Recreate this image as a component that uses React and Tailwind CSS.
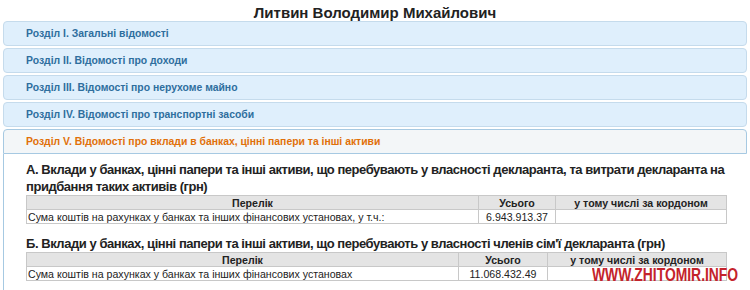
import React from "react";

const sections = [
  "Розділ I. Загальні відомості",
  "Розділ II. Відомості про доходи",
  "Розділ III. Відомості про нерухоме майно",
  "Розділ IV. Відомості про транспортні засоби",
];

function AssetTable({ cols, name, total }) {
  return (
    <table className="w-[701px] table-fixed border-collapse text-[10.6px] leading-[12px] text-[#222]">
      <colgroup>
        <col style={{ width: cols[0] }} />
        <col style={{ width: cols[1] }} />
        <col />
      </colgroup>
      <thead>
        <tr className="bg-[#e4e4e4]">
          <th className="h-[14px] border border-[#c8c8c8] p-0 text-center font-bold">Перелік</th>
          <th className="border border-[#c8c8c8] p-0 text-center font-bold">Усього</th>
          <th className="border border-[#c8c8c8] p-0 text-center font-bold">у тому числі за кордоном</th>
        </tr>
      </thead>
      <tbody>
        <tr>
          <td className="h-[14px] whitespace-nowrap border border-[#c8c8c8] px-[1px] py-0">{name}</td>
          <td className="border border-[#c8c8c8] p-0 text-center">{total}</td>
          <td className="border border-[#c8c8c8] p-0"></td>
        </tr>
      </tbody>
    </table>
  );
}

export default function App() {
  return (
    <div className="relative h-[290px] w-[750px] overflow-hidden bg-white font-[family-name:'Liberation_Sans',Arial,sans-serif]">
      <h1 className="h-[21px] pt-[5px] text-center text-[15px] font-bold leading-[16px] text-[#222]">
        Литвин Володимир Михайлович
      </h1>
      <div className="mx-[3px]">
        {sections.map((s) => (
          <div
            key={s}
            className="mb-[2px] h-[25px] rounded-[4px] border border-[#c5dbec] bg-[#dfeffc] pl-[22px] text-[10.4px] font-bold leading-[23px] text-[#2e6e9e]"
          >
            {s}
          </div>
        ))}
        <div className="h-[25px] rounded-t-[4px] border border-[#a6c9e2] bg-[#f3f6f8] pl-[22px] text-[10.4px] font-bold leading-[23px] text-[#e17009]">
          Розділ V. Відомості про вклади в банках, цінні папери та інші активи
        </div>
        <div className="h-[200px] border-l border-[#a6c9e2] pl-[22px] pt-[7px]">
          <h3 className="w-[701px] text-[13px] font-bold leading-[17px] tracking-[-0.45px] text-[#222]">
            А. Вклади у банках, цінні папери та інші активи, що перебувають у власності декларанта, та витрати декларанта на придбання таких активів (грн)
          </h3>
          <AssetTable cols={["452px", "77px"]} name="Сума коштів на рахунках у банках та інших фінансових установах, у т.ч.:" total="6.943.913.37" />
          <h3 className="mt-[12px] text-[13px] font-bold leading-[16px] tracking-[-0.45px] text-[#222]">
            Б. Вклади у банках, цінні папери та інші активи, що перебувають у власності членів сім'ї декларанта (грн)
          </h3>
          <AssetTable cols={["432px", "89px"]} name="Сума коштів на рахунках у банках та інших фінансових установах" total="11.068.432.49" />
        </div>
      </div>
      <div className="absolute left-[592px] top-[265px] origin-left scale-x-[0.73] text-[19px] font-bold leading-[19px] text-[#c4232b]">
        WWW.ZHITOMIR.INFO
      </div>
    </div>
  );
}
